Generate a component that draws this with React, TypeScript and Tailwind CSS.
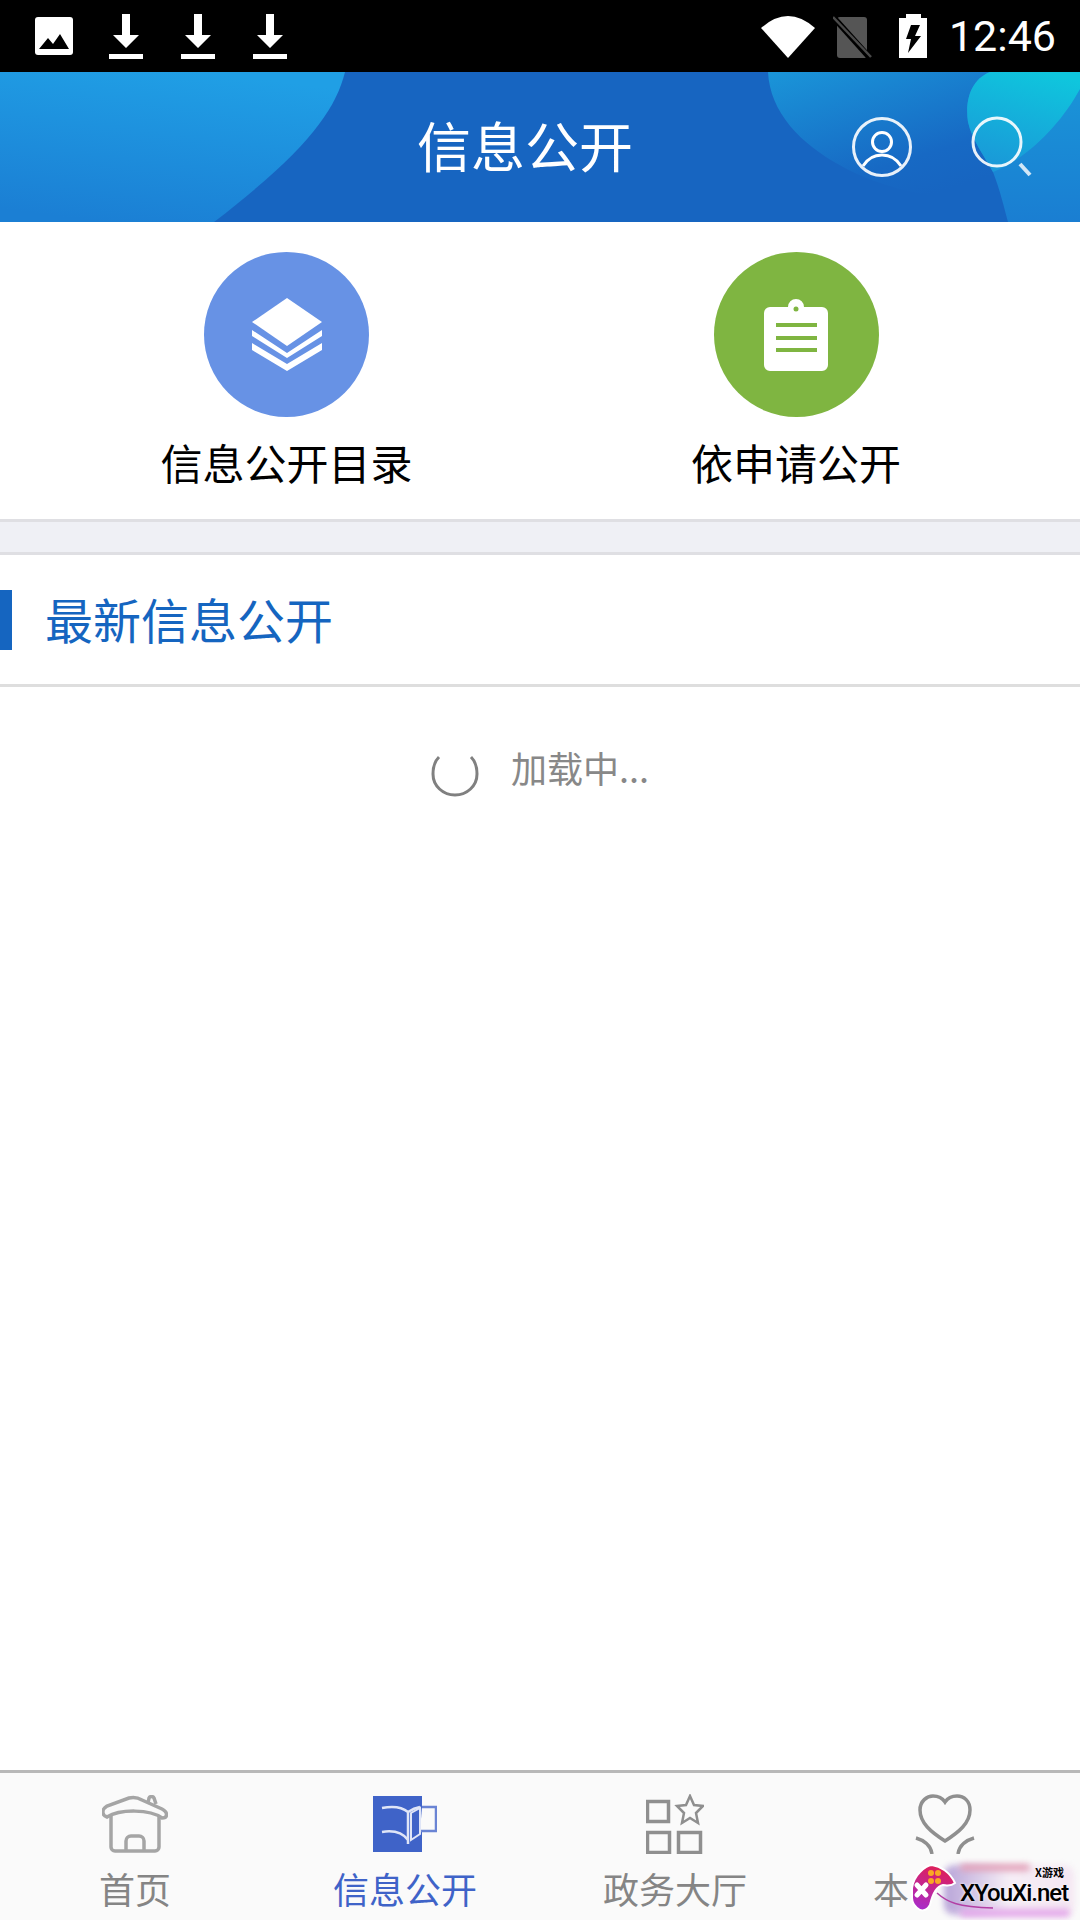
import React from 'react';

const cjk = '[font-family:"Noto_Sans_CJK_SC","Noto_Sans",sans-serif]';

function DownloadIcon() {
  return (
    <svg width="36" height="48" viewBox="0 0 36 48" fill="#fff">
      <path d="M14 2h8v21h9L18 36 5 23h9z" />
      <rect x="1" y="42" width="34" height="5" />
    </svg>
  );
}

function StatusBar() {
  return (
    <div className="flex h-[72px] shrink-0 items-center bg-black text-white">
      <svg className="ml-[35px]" width="38" height="38" viewBox="0 0 38 38">
        <rect width="38" height="38" rx="3" fill="#fff" />
        <path d="M4 32l9-11 5 6 7-10 9 15z" fill="#000" />
      </svg>
      <div className="ml-[35px] flex gap-[36px]">
        <DownloadIcon />
        <DownloadIcon />
        <DownloadIcon />
      </div>
      <div className="ml-auto flex items-center">
        <svg width="54" height="44" viewBox="0 0 54 44">
          <path d="M0 14Q27-10 54 14L27 44z" fill="#fff" />
        </svg>
        <svg className="ml-[18px]" width="40" height="44" viewBox="0 0 40 44">
          <path d="M4 6a3 3 0 0 1 3-3h24a3 3 0 0 1 3 3v36a2 2 0 0 1-2 2H7a3 3 0 0 1-3-3z" fill="#555" />
          <path d="M1 4l36 40" stroke="#000" strokeWidth="6" />
          <path d="M0 3l38 40" stroke="#4a4a4a" strokeWidth="2.5" />
        </svg>
        <svg className="ml-[26px]" width="28" height="44" viewBox="0 0 28 44">
          <path d="M7 0h15v4h6v40H0V4h7z" fill="#fff" />
          <path d="M12 11h9l-5 11h6L9 39l3-14H7z" fill="#000" />
        </svg>
        <span className="ml-[22px] mr-[24px] font-['Roboto'] text-[43px] leading-none">12:46</span>
      </div>
    </div>
  );
}

function Header() {
  return (
    <div className="relative flex h-[150px] shrink-0 items-center justify-center overflow-hidden bg-[#1765c1] pb-[4px] pr-[30px]">
      <svg className="absolute inset-0" width="1080" height="150" viewBox="0 0 1080 150">
        <defs>
          <linearGradient id="leftBlob" x1="0.6" y1="0" x2="0.3" y2="1">
            <stop offset="0" stopColor="#209fe5" />
            <stop offset="1" stopColor="#1b7fd4" />
          </linearGradient>
          <linearGradient id="midBlob" x1="0.05" y1="0" x2="0.6" y2="1">
            <stop offset="0" stopColor="#1a94d8" />
            <stop offset="0.75" stopColor="#1769c4" />
            <stop offset="1" stopColor="#1765c1" />
          </linearGradient>
          <linearGradient id="rightBlob" x1="0.5" y1="0" x2="0.5" y2="1">
            <stop offset="0" stopColor="#1a96d8" />
            <stop offset="1" stopColor="#1a7ed2" />
          </linearGradient>
          <linearGradient id="tealBlob" x1="0.7" y1="0" x2="0.4" y2="1">
            <stop offset="0" stopColor="#0fc6dd" />
            <stop offset="1" stopColor="#1a98d8" />
          </linearGradient>
        </defs>
        <path d="M0 0H345C335 40 305 80 214 150H0z" fill="url(#leftBlob)" />
        <path d="M768 0C770 40 800 72 843 95C880 115 930 128 1000 130V0z" fill="url(#midBlob)" />
        <path d="M990 0C970 8 965 30 968 50C972 68 985 85 993 100C1000 118 1004 135 1008 150H1080V0z" fill="url(#rightBlob)" />
        <path d="M990 0C970 8 965 30 968 50C972 68 985 85 993 100C1030 85 1062 50 1080 17V0z" fill="url(#tealBlob)" />
      </svg>
      <span className={`relative text-[54px] leading-none text-white ${cjk}`}>信息公开</span>
      <svg className="absolute left-[850px] top-[43px]" width="64" height="64" viewBox="0 0 64 64" fill="none" stroke="#fff" strokeWidth="3">
        <circle cx="32" cy="32" r="28.5" opacity="0.9" />
        <circle cx="32" cy="27" r="9.5" />
        <path d="M13 51C18 43 25 40 32 40S46 43 51 51" />
      </svg>
      <svg className="absolute left-[970px] top-[43px]" width="64" height="64" viewBox="0 0 64 64" fill="none" stroke="#fff" strokeWidth="3">
        <circle cx="27" cy="27" r="24" opacity="0.9" />
        <path d="M50 49l10 11" strokeWidth="4" opacity="0.8" />
      </svg>
    </div>
  );
}

function QuickLinks() {
  return (
    <div className="flex h-[297px] shrink-0">
      <div className="flex w-[573px] flex-col items-center pt-[30px]">
        <div className="flex h-[165px] w-[165px] items-center justify-center rounded-full bg-[#6792e5]">
          <svg width="72" height="73" viewBox="0 0 72 73" fill="#fff">
            <path d="M36 0l35 24-35 24L1 24z" />
            <path d="M1 32l35 23 35-23v6L36 60 1 38z" />
            <path d="M1 45l35 21 35-21v7L36 73 1 52z" />
          </svg>
        </div>
        <span className={`mt-[17px] text-[42px] leading-[56px] text-black ${cjk}`}>信息公开目录</span>
      </div>
      <div className="flex w-[446px] flex-col items-center pt-[30px]">
        <div className="flex h-[165px] w-[165px] items-center justify-center rounded-full bg-[#7fb541]">
          <svg width="64" height="72" viewBox="0 0 64 72">
            <path d="M6 8h18a8 8 0 0 1 16 0h18a6 6 0 0 1 6 6v52a6 6 0 0 1-6 6H6a6 6 0 0 1-6-6V14a6 6 0 0 1 6-6z" fill="#fff" />
            <circle cx="32" cy="10" r="2.5" fill="#7fb541" />
            <rect x="12" y="24" width="41" height="4" fill="#7fb541" />
            <rect x="12" y="37" width="41" height="4" fill="#7fb541" />
            <rect x="12" y="49" width="41" height="4" fill="#7fb541" />
          </svg>
        </div>
        <span className={`mt-[17px] text-[42px] leading-[56px] text-black ${cjk}`}>依申请公开</span>
      </div>
    </div>
  );
}

function TabItem({ label, active, className, children }: { label: string; active?: boolean; className?: string; children: React.ReactNode }) {
  return (
    <div className="flex flex-1 flex-col items-center">
      <div className="flex h-[60px] items-center justify-center">{children}</div>
      <span className={`mt-[12px] text-[36px] leading-[44px] ${active ? 'text-[#3f63c8]' : 'text-[#858585]'} ${className ?? ''} ${cjk}`}>{label}</span>
    </div>
  );
}

function Watermark() {
  return (
    <div className="absolute left-[calc(100%-180px)] top-[82px] h-[65px] w-[180px] overflow-hidden">
      <div className="absolute left-[44px] top-[10px] h-[50px] w-[130px] rounded-[10px] bg-gradient-to-r from-[#b8a4d8] via-[#f6eef6] to-[#f4e6f2] blur-[3px]" />
      <div className="absolute left-[60px] top-[9px] h-[7px] w-[70px] rounded-full bg-[#e2a0b8] blur-[3px]" />
      <div className="absolute bottom-[3px] left-[60px] h-[8px] w-[110px] rounded-full bg-[#e4a8ea] blur-[3px]" />
      <svg className="absolute left-0 top-0" width="100" height="60" viewBox="0 0 100 60" fill="none">
        <path d="M37 38C47 47 57 52 93 53" stroke="#b23fa4" strokeWidth="1.5" />
        <defs>
          <linearGradient id="padFill" x1="0.6" y1="0" x2="0.3" y2="1">
            <stop offset="0" stopColor="#e01f55" />
            <stop offset="1" stopColor="#a92cc9" />
          </linearGradient>
        </defs>
        <path d="M32 10C40 11 50 17 55 28C50 32 46 30 43 30C37 31 33 37 30 50C27 55 23 56 20 55C15 52 12 48 12 43L12 33C13 26 16 21 20 17C24 13 28 10 32 10z" fill="url(#padFill)" stroke="#fff" strokeWidth="2" />
        <path d="M17 30l9 10M26 30l-9 10" stroke="#fff" strokeWidth="5" strokeLinecap="round" />
        <circle cx="31" cy="18" r="3" fill="#f9a825" />
        <circle cx="38" cy="18" r="3" fill="#f9a825" />
        <circle cx="31" cy="26" r="3" fill="#f9a825" />
        <circle cx="38" cy="26" r="3" fill="#f9a825" />
      </svg>
      <span className={`absolute left-[135px] top-[10px] text-[11px] font-bold leading-[14px] text-black ${cjk}`}>X游戏</span>
      <span className="absolute left-[60px] top-[24px] font-['Roboto'] text-[24px] font-medium leading-[28px] tracking-[-1px] text-black [text-shadow:0_0_3px_#fff]">XYouXi.net</span>
    </div>
  );
}

function TabBar() {
  return (
    <div className="relative flex h-[150px] shrink-0 border-t-[3px] border-[#b8b8b8] bg-[#fafafa] pt-[21px]">
      <TabItem label="首页">
        <svg width="66" height="58" viewBox="0 0 66 58" fill="none" stroke="#a5a5a5" strokeWidth="3.5">
          <path d="M9 21v31a4 4 0 0 0 4 4h40a4 4 0 0 0 4-4V21" />
          <path d="M5 22C-1 20 0 14 5 11L27 3c4-1 8-1 13 2l20 9c6 3 6 9 0 9C48 14 18 14 5 22z" />
          <path d="M46 8l1-5c1-2 4-2 5 0l2 6" />
          <path d="M24 56V46a5 5 0 0 1 5-5h8a5 5 0 0 1 5 5v10" />
        </svg>
      </TabItem>
      <TabItem label="信息公开" active>
        <svg width="64" height="56" viewBox="0 0 64 56">
          <rect width="49" height="56" fill="#3f63c8" />
          <path d="M9 12c10-2 20-1 26 4v32M9 36c12-2 20 0 26 8M35 16c3-2 6-4 12-5" fill="none" stroke="#dfe5f7" strokeWidth="2.5" />
          <path d="M49 11h14v24H47" fill="#fafafa" stroke="#6a84d4" strokeWidth="2.5" />
          <path d="M38 17l9-5v26l-9 6z" fill="#3f63c8" stroke="#dfe5f7" strokeWidth="2" />
        </svg>
      </TabItem>
      <TabItem label="政务大厅">
        <svg width="58" height="60" viewBox="0 0 58 60" fill="none" stroke="#8f8f8f" strokeWidth="3.5">
          <rect x="1.5" y="7.5" width="21" height="20" />
          <rect x="1.5" y="38.5" width="22" height="20" />
          <rect x="32.5" y="38.5" width="22" height="20" />
          <path d="M44 2l4 9 9 1-7 7 2 10-8-5-8 5 2-10-7-7 9-1z" strokeWidth="2.5" />
        </svg>
      </TabItem>
      <TabItem label="本" className="pr-[108px]">
        <svg width="60" height="60" viewBox="0 0 60 60" fill="none" stroke="#8f8f8f" strokeWidth="3.5">
          <path d="M30 47C16 38 5 29 5 16 5 7 12 2 18 2c6 0 10 3 12 6 2-3 6-6 12-6 7 0 13 5 13 14 0 13-11 22-25 31z" />
          <path d="M1 44c7 2 15 7 16 16M59 44c-7 2-15 7-16 16" />
        </svg>
      </TabItem>
      <Watermark />
    </div>
  );
}

export default function App() {
  return (
    <div className="flex h-[1920px] w-[1080px] flex-col overflow-hidden bg-white">
      <StatusBar />
      <Header />
      <QuickLinks />
      <div className="h-[36px] shrink-0 border-y-[3px] border-[#dfdfe3] bg-[#eff0f5]" />
      <div className="flex h-[132px] shrink-0 items-center border-b-[3px] border-[#dedede]">
        <div className="h-[60px] w-[12px] bg-[#1565c0]" />
        <span className={`mb-[4px] ml-[33px] text-[48px] leading-none text-[#1565c0] ${cjk}`}>最新信息公开</span>
      </div>
      <div className="flex-1">
        <div className="flex items-center justify-center pt-[58px]">
          <svg width="48" height="46" viewBox="0 0 48 46" fill="none" stroke="#808080" strokeWidth="3">
            <path d="M8 6C4 10 2 16 2 23c0 12 10 21 22 21s22-9 22-21c0-7-2-13-6-17" />
          </svg>
          <span className={`mb-[14px] ml-[32px] text-[36px] leading-[44px] text-[#888888] ${cjk}`}>加载中...</span>
        </div>
      </div>
      <TabBar />
    </div>
  );
}
